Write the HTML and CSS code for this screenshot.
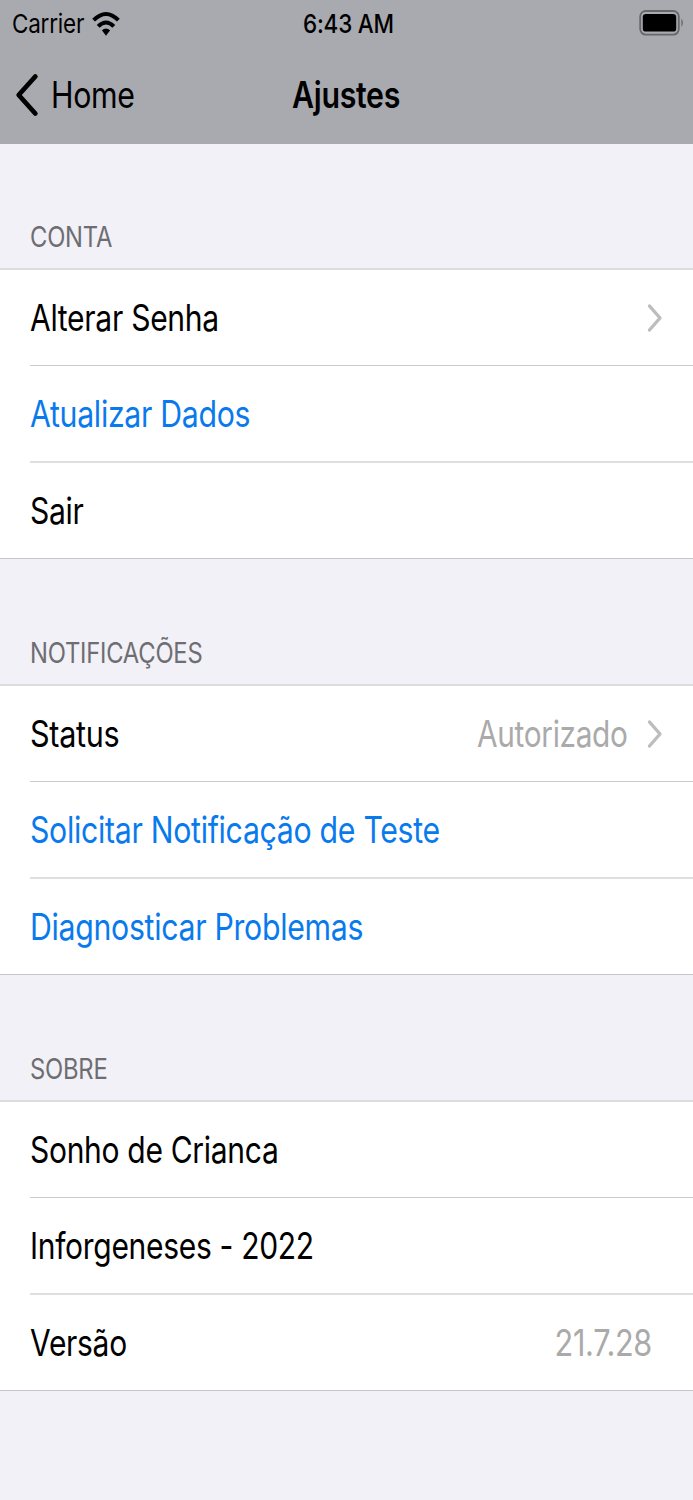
FILE: index.html
```html
<!DOCTYPE html>
<html lang="pt-BR">
<head>
<meta charset="utf-8">
<title>Ajustes</title>
<link rel="stylesheet" href="styles.css">
</head>
<body>
<header class="header">
  <div class="status-bar">
    <div class="carrier"><span class="t carrier-name">Carrier</span>
      <svg class="wifi" width="28" height="26" viewBox="0 0 28 26"><g fill="none" stroke="#000" stroke-width="4"><path d="M1.6 9.2Q14-3.4 26.4 9.2"/><path d="M6.2 15.4Q14 7.4 21.8 15.4"/></g><path d="M9.9 19.3Q14 15.8 18.1 19.3L14 24.8Z"/></svg>
    </div>
    <span class="t clock">6:43 AM</span>
    <svg class="battery" width="46" height="28" viewBox="0 0 46 28"><rect x="2.2" y="2" width="38.6" height="23.6" rx="5.5" fill="none" stroke="#66676a" stroke-width="1.8"/><rect x="4.8" y="5" width="33.4" height="17.6" rx="3.2"/><path d="M43.4 9.5Q46.4 13.8 43.4 18Z" fill="#66676a"/></svg>
  </div>
  <nav class="nav-bar">
    <a class="back"><svg class="back-icon" width="24" height="46" viewBox="0 0 24 46"><path d="M20.3 4.5L3.7 23L20.3 41.5" fill="none" stroke="#000" stroke-width="4.8" stroke-linecap="round" stroke-linejoin="round"/></svg><span class="t">Home</span></a>
    <h1 class="t title">Ajustes</h1>
  </nav>
</header>
<main>
  <section class="group">
    <h2 class="heading"><span class="t">CONTA</span></h2>
    <div class="rows">
      <div class="row"><span class="t">Alterar Senha</span><svg class="chevron" width="16" height="30" viewBox="0 0 16 30"><path d="M2.5 3L13 15L2.5 27"/></svg></div>
      <div class="row action"><span class="t">Atualizar Dados</span></div>
      <div class="row"><span class="t">Sair</span></div>
    </div>
  </section>
  <section class="group">
    <h2 class="heading"><span class="t">NOTIFICAÇÕES</span></h2>
    <div class="rows">
      <div class="row"><span class="t status">Status</span><span class="t value">Autorizado</span><svg class="chevron" width="16" height="30" viewBox="0 0 16 30"><path d="M2.5 3L13 15L2.5 27"/></svg></div>
      <div class="row action"><span class="t">Solicitar Notificação de Teste</span></div>
      <div class="row action"><span class="t">Diagnosticar Problemas</span></div>
    </div>
  </section>
  <section class="group about">
    <h2 class="heading"><span class="t">SOBRE</span></h2>
    <div class="rows">
      <div class="row"><span class="t">Sonho de Crianca</span></div>
      <div class="row"><span class="t">Inforgeneses - 2022</span></div>
      <div class="row"><span class="t">Versão</span><span class="t value version">21.7.28</span></div>
    </div>
  </section>
</main>
</body>
</html>
```
FILE: styles.css
```css
* { box-sizing: border-box; }
body {
  --fit: .824;
  margin: 0;
  height: 1500px;
  overflow: hidden;
  background: #f2f1f7;
  color: #000;
  font-family: Inter, "Liberation Sans", sans-serif;
  font-size: 36.5px;
}
h1, h2 { margin: 0; font-size: inherit; font-weight: inherit; }
.t {
  display: inline-block;
  white-space: nowrap;
  transform: scaleX(var(--fit));
  transform-origin: left center;
  letter-spacing: -.01em;
}
.header { height: 144px; background: #a9aaaf; }
.status-bar, .nav-bar {
  display: grid;
  grid-template-columns: 1fr auto 1fr;
  align-items: center;
}
.status-bar { --fit: .865; height: 47px; font-size: 26px; padding: 0 9px 0 12px; }
.carrier { display: flex; align-items: center; }
.carrier-name { width: 80px; }
.clock, .title { transform-origin: center; grid-column: 2; }
.clock { font-weight: 500; }
.battery { justify-self: end; margin-top: -2px; }
.nav-bar { --fit: .83; height: 96px; padding: 0 15px; }
.back { display: flex; align-items: center; gap: 12px; }
.title { font-weight: 600; }
.heading {
  --fit: .85;
  height: 124px;
  margin-top: 0;
  padding: 76px 30px 0;
  font-size: 28px;
  line-height: 34px;
  color: #6d6d72;
}
.group + .group .heading { height: 125px; padding-top: 77px; }
.header + main { --fit: .824; }
.about .row { --fit: .822; }
.rows {
  height: 291px;
  display: grid;
  grid-template-rows: 95px 96px 97px;
  background: #fff;
  border-top: 2px solid #dcdce0;
  border-bottom: 1px solid #c6c6ca;
}
.row {
  display: flex;
  align-items: center;
  margin-left: 30px;
  padding: 1px 30px 0 0;
}
.row + .row { border-top: 1px solid #cbcbcd; }
.row + .row + .row { border-top: 2px solid #dfdfe1; padding-top: 0; }
.row.action { --fit: .829; color: #087aed; }
.chevron { margin-left: auto; fill: none; stroke: #bdbdbf; stroke-width: 3.4; stroke-linecap: round; stroke-linejoin: round; }
.status { --fit: .838; }
.value { --fit: .816; margin-left: auto; transform-origin: right center; color: #aaa; }
.value + .chevron { margin-left: 19px; }
.about .version { --fit: .84; margin-right: 11px; }
```
